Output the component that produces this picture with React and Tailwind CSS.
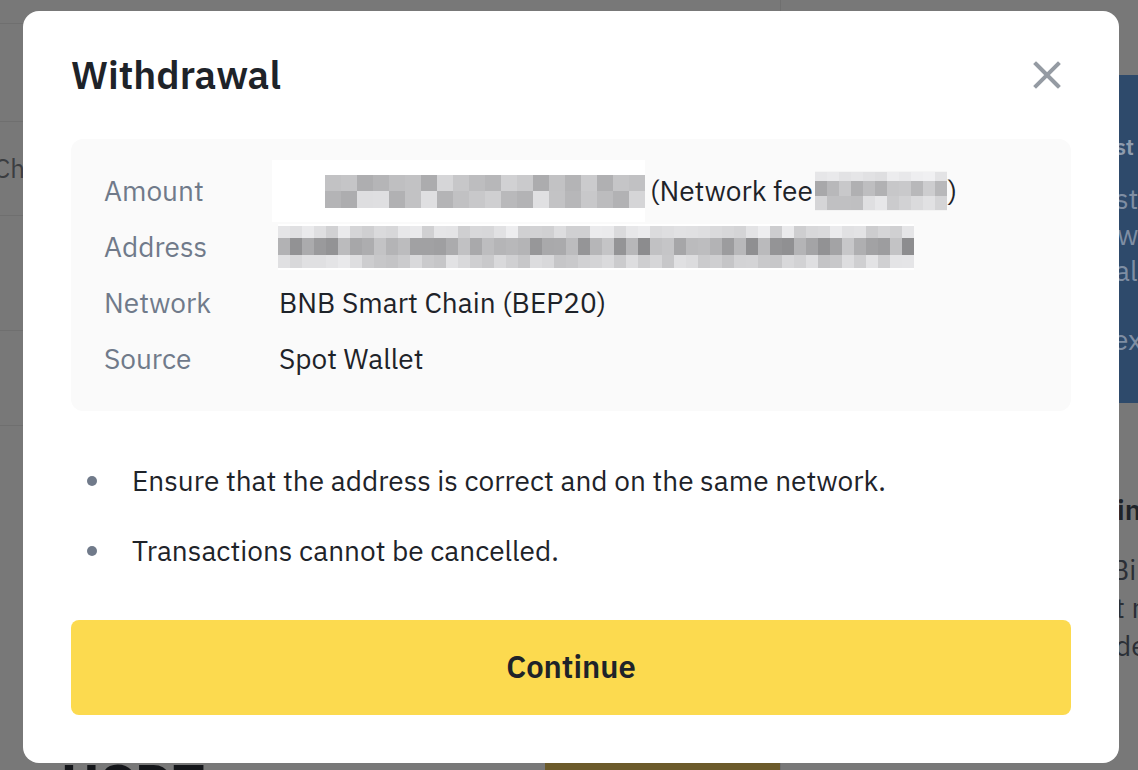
import React from "react";

// deterministic grays for the pixelated (redacted) values
function makeRand(seed) {
  let s = seed;
  return () => {
    s = (s * 9301 + 49297) % 233280;
    return s / 233280;
  };
}

function PixelBlur({ cols, cell, rows, seed }) {
  const rand = makeRand(seed);
  return (
    <div className="flex flex-col">
      {rows.map((row, r) => (
        <div key={r} className="flex">
          {[...Array(cols)].map((e, c) => {
            const g = Math.round(row.min + rand() * (row.max - row.min));
            return (
              <div
                key={c}
                style={{
                  width: cell,
                  height: row.h,
                  backgroundColor: `rgb(${g},${g},${g + 2})`,
                }}
              ></div>
            );
          })}
        </div>
      ))}
    </div>
  );
}

function CloseIcon() {
  return (
    <svg width="28" height="28" viewBox="0 0 28 28" fill="none">
      <path
        d="M3 3L25 25M25 3L3 25"
        stroke="#959ba3"
        strokeWidth="4"
        strokeLinecap="square"
      />
    </svg>
  );
}

function InfoRow({ label, children }) {
  return (
    <div className="flex h-14 items-center text-[28px]">
      <div className="w-[175px] shrink-0 text-[#707a8a]">{label}</div>
      <div className="flex items-center text-[#1e2329]">{children}</div>
    </div>
  );
}

function Bullet({ children, className }) {
  return (
    <li className={`flex h-8 items-center text-[28px] text-[#1e2329] ${className}`}>
      <span className="ml-4 mr-[35px] h-[10px] w-[10px] shrink-0 rounded-full bg-[#707a8a]"></span>
      {children}
    </li>
  );
}

function BackgroundPage() {
  return (
    <div className="flex h-full w-full">
      {/* left side: table of the page under the dialog */}
      <div className="flex w-[783px] flex-col border-r border-[#6f6f6f]">
        <div className="h-[24px] border-b border-[#6f6f6f]"></div>
        <div className="h-[98px] border-b border-[#6f6f6f]"></div>
        <div className="flex h-[94px] items-center border-b border-[#6f6f6f] text-[26px] text-[#3b3d40]">
          <span className="-ml-[6px]">Ch</span>
        </div>
        <div className="h-[115px] border-b border-[#6f6f6f]"></div>
        <div className="h-[95px] border-b border-[#6f6f6f]"></div>
        <div className="mt-auto flex h-[7px] items-start overflow-hidden">
          <div className="flex w-[205px] justify-end overflow-hidden whitespace-nowrap text-[56px] leading-[40px] font-bold text-[#14161a]">
            Buy USDT
          </div>
          <div className="ml-[340px] h-full w-[235px] bg-[#6b5a2a]"></div>
        </div>
      </div>
      {/* right side: blue promo panel and text */}
      <div className="flex flex-1 flex-col">
        <div className="h-[75px]"></div>
        <div className="flex h-[328px] flex-col bg-[#2e4a6b] pl-[334px] text-[28px] leading-[36px] text-[#7f8ea3] whitespace-nowrap">
          <div className="mt-[54px] text-[22px] font-semibold text-[#8f9cad]">st</div>
          <div className="mt-[16px]">ste</div>
          <div className="pl-[2px]">w</div>
          <div>al</div>
          <div className="mt-[33px] -ml-[2px]">ex</div>
        </div>
        <div className="flex flex-col pl-[334px] text-[28px] leading-[38px] text-[#1e2329] whitespace-nowrap">
          <div className="mt-[88px] pl-[2px] font-semibold">in</div>
          <div className="mt-[22px] -ml-[4px] text-[#2b2f36]">Bi</div>
          <div className="text-[#2b2f36]">t n</div>
          <div className="text-[#2b2f36]">de</div>
        </div>
      </div>
    </div>
  );
}

export default function App() {
  return (
    <main className="relative h-[770px] w-[1138px] overflow-hidden bg-[#787878] font-['IBM_Plex_Sans','Inter',sans-serif]">
      <BackgroundPage></BackgroundPage>
      <div className="absolute inset-0 flex pl-[23px] pt-[11px]">
        <div className="h-[752px] w-[1096px] rounded-[16px] bg-white px-12 pt-10">
          <div className="flex h-12 items-center justify-between">
            <h1 className="text-[39px] leading-[48px] font-semibold text-[#1e2329]">
              Withdrawal
            </h1>
            <button className="mr-[10px]">
              <CloseIcon></CloseIcon>
            </button>
          </div>

          <div className="mt-10 rounded-[12px] bg-[#fafafa] px-[33px] py-6">
            <InfoRow label="Amount">
              <div className="-ml-[7px] flex h-[62px] w-[373px] items-center bg-white pl-[53px]">
                <PixelBlur
                  cols={20}
                  cell={16}
                  seed={7}
                  rows={[
                    { h: 16, min: 168, max: 220 },
                    { h: 17, min: 170, max: 225 },
                  ]}
                ></PixelBlur>
              </div>
              <span className="ml-[5px] mr-[2px]">(Network fee</span>
              <div className="flex h-[40px] items-center bg-[#f4f4f4]">
                <PixelBlur
                  cols={11}
                  cell={12}
                  seed={31}
                  rows={[
                    { h: 9, min: 222, max: 240 },
                    { h: 15, min: 160, max: 215 },
                    { h: 14, min: 190, max: 232 },
                  ]}
                ></PixelBlur>
              </div>
              <span className="ml-[1px]">)</span>
            </InfoRow>
            <InfoRow label="Address">
              <div className="-ml-[1px] bg-white py-[2px]">
                <PixelBlur
                  cols={53}
                  cell={12}
                  seed={13}
                  rows={[
                    { h: 12, min: 205, max: 238 },
                    { h: 17, min: 140, max: 200 },
                    { h: 13, min: 195, max: 235 },
                  ]}
                ></PixelBlur>
              </div>
            </InfoRow>
            <InfoRow label="Network">BNB Smart Chain (BEP20)</InfoRow>
            <InfoRow label="Source">Spot Wallet</InfoRow>
          </div>

          <ul className="mt-[54px]">
            <Bullet>Ensure that the address is correct and on the same network.</Bullet>
            <Bullet className="mt-[38px]">Transactions cannot be cancelled.</Bullet>
          </ul>

          <button className="mt-[53px] flex h-[95px] w-full items-center justify-center rounded-[8px] bg-[#fcda4f] text-[31px] font-semibold text-[#1e2329]">
            Continue
          </button>
        </div>
      </div>
    </main>
  );
}
